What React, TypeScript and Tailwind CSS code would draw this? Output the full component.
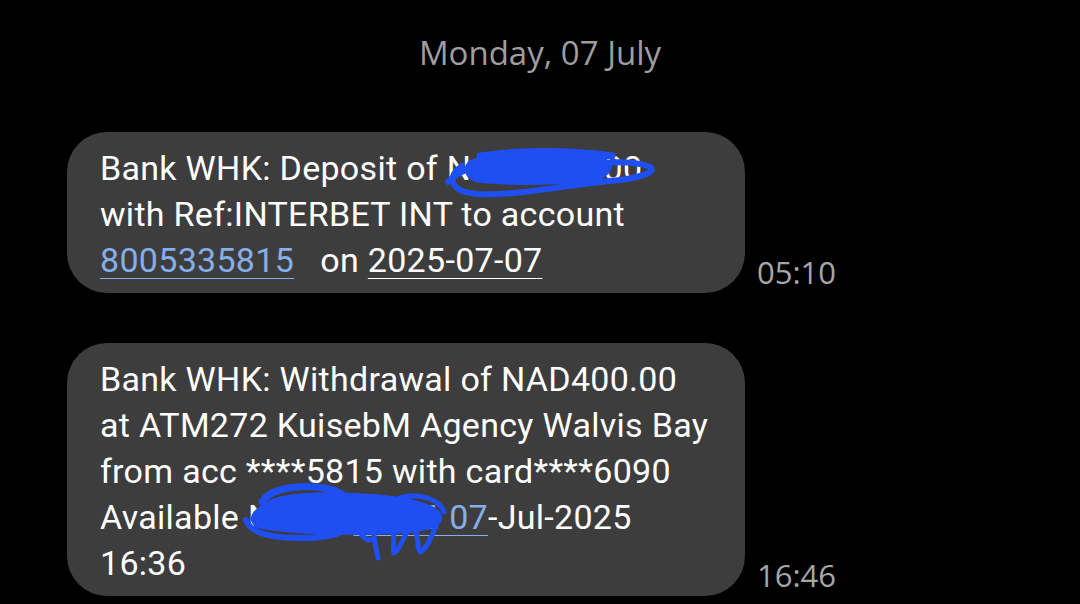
export default function App() {
  const bubble =
    "w-[678px] rounded-[40px] bg-[#3d3d3d] pl-[33px] pr-[10px] pt-[13px] pb-[10px] text-white text-[34px] leading-[46px] tracking-[0.3px] whitespace-nowrap";
  const stamp = "pb-[4px] text-[31px] leading-[34px] text-[#a6a6a6]";
  const sideFont = { fontFamily: "'Open Sans', 'Noto Sans', sans-serif" };
  return (
    <div
      className="relative w-[1080px] h-[604px] bg-black overflow-hidden"
      style={{ fontFamily: "Roboto, 'Liberation Sans', sans-serif" }}
    >
      <div className="pt-[33px] text-center text-[33px] leading-[40px] text-[#9e9e9e]" style={sideFont}>
        Monday, 07 July
      </div>

      <div className="mt-[59px] flex items-end gap-[12px] pl-[67px]">
        <div className={bubble}>
          <div>Bank WHK: Deposit of NAD0000.00</div>
          <div>with Ref:INTERBET INT to account</div>
          <div>
            <span className="text-[#86aee8] underline decoration-1 underline-offset-[6px]">8005335815</span>
            <span className="whitespace-pre">{"   on "}</span>
            <span className="underline decoration-1 underline-offset-[6px]">2025-07-07</span>
          </div>
        </div>
        <div className={stamp} style={sideFont}>
          05:10
        </div>
      </div>

      <div className="mt-[50px] flex items-end gap-[12px] pl-[67px]">
        <div className={bubble}>
          <div>Bank WHK: Withdrawal of NAD400.00</div>
          <div>at ATM272 KuisebM Agency Walvis Bay</div>
          <div>from acc ****5815 with card****6090</div>
          <div>
            {"Available NAD0,."}
            <span className="text-[#86aee8] underline decoration-1 underline-offset-[6px]">00.46 07</span>
            -Jul-2025
          </div>
          <div>16:36</div>
        </div>
        <div className={stamp} style={sideFont}>
          16:46
        </div>
      </div>

      <svg
        className="pointer-events-none absolute left-0 top-0"
        width="1080"
        height="604"
        viewBox="0 0 1080 604"
      >
        <g fill="#1f4ff2" stroke="#1f4ff2" strokeLinecap="round" strokeLinejoin="round">
          {/* first redaction */}
          <path
            d="M470 160 C500 150 570 150 605 158 C618 165 612 178 590 182 C550 186 500 186 475 182 C462 176 462 166 470 160 Z"
            stroke="none"
          />
          <path
            d="M462 166 C446 178 450 192 478 194 C520 196 570 184 620 180 C648 176 658 170 648 166 C630 160 600 162 580 166"
            fill="none"
            strokeWidth="6"
          />
          <path d="M448 182 C458 172 470 166 490 162" fill="none" strokeWidth="6" />
          <path d="M480 156 C520 150 570 150 612 156" fill="none" strokeWidth="7" />

          {/* second redaction */}
          <path
            d="M262 505 C275 492 320 490 370 494 C410 496 440 505 442 516 C444 528 425 533 390 534 C340 536 280 534 258 528 C246 522 250 512 262 505 Z"
            stroke="none"
          />
          <path
            d="M262 502 C270 488 300 484 325 488 C345 492 350 500 340 504"
            fill="none"
            strokeWidth="7"
          />
          <path
            d="M246 520 C250 532 268 538 300 538 C330 538 345 532 350 526"
            fill="none"
            strokeWidth="6"
          />
          <path
            d="M372 520 C374 538 376 550 378 558 M392 520 C396 534 392 548 394 553 C402 548 404 532 412 526 C420 532 416 548 420 552 C428 548 432 534 436 526 M356 522 C360 534 364 540 370 540"
            fill="none"
            strokeWidth="5"
          />
          <path
            d="M400 498 C420 492 440 500 444 512"
            fill="none"
            strokeWidth="5"
          />
        </g>
      </svg>
    </div>
  );
}
